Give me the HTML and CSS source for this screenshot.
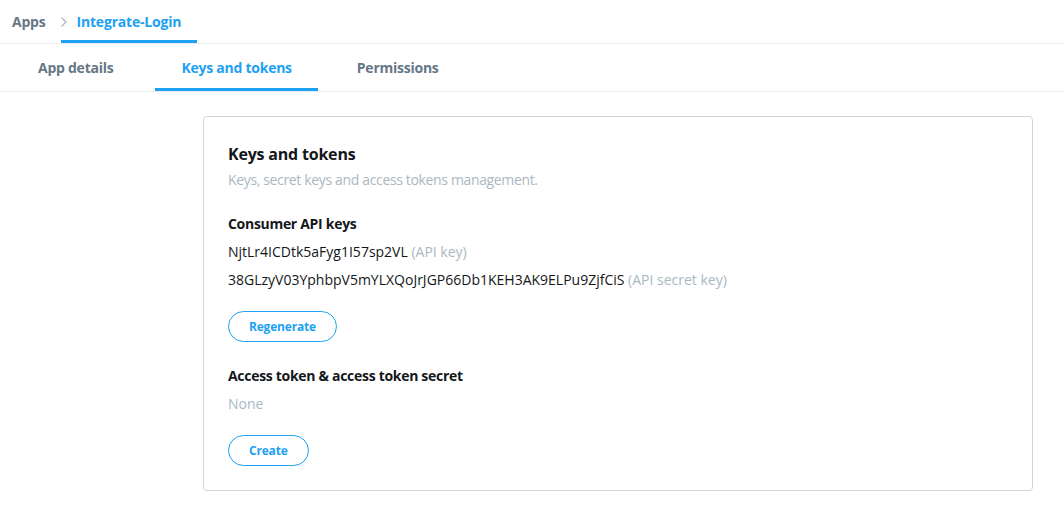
FILE: index.html
```html
<!DOCTYPE html>
<html>
<head>
<meta charset="utf-8">
<link rel="stylesheet" href="styles.css">
</head>
<body>
<header class="crumbs">
  <a class="crumb">Apps</a>
  <svg class="chev" width="8" height="12" viewBox="0 0 8 12"><path d="M1.5 1.5 L6 6 L1.5 10.5" fill="none" stroke="#aab8c2" stroke-width="1.3"/></svg>
  <a class="crumb crumb-active">Integrate-Login</a>
</header>
<nav class="tabs">
  <a class="tab">App details</a>
  <a class="tab tab-active">Keys and tokens</a>
  <a class="tab">Permissions</a>
</nav>
<main class="content">
  <section class="card">
    <h1 class="card-title">Keys and tokens</h1>
    <p class="card-sub">Keys, secret keys and access tokens management.</p>
    <h2 class="sect">Consumer API keys</h2>
    <p class="key">NjtLr4ICDtk5aFyg1I57sp2VL <span class="muted">(API key)</span></p>
    <p class="key">38GLzyV03YphbpV5mYLXQoJrJGP66Db1KEH3AK9ELPu9ZjfCiS <span class="muted">(API secret key)</span></p>
    <button class="btn btn-regen">Regenerate</button>
    <h2 class="sect sect-2">Access token &amp; access token secret</h2>
    <p class="key muted">None</p>
    <button class="btn btn-create">Create</button>
  </section>
</main>
</body>
</html>
```
FILE: styles.css
```css
* { box-sizing: border-box; }
body {
  margin: 0;
  font-family: "Open Sans", "Noto Sans", sans-serif;
  color: #14171a;
  background: #fff;
}
.crumbs {
  height: 44px;
  display: flex;
  align-items: stretch;
  padding-left: 12px;
  border-bottom: 1px solid #e6ecf0;
}
.crumb {
  font-size: 14px;
  font-weight: 700;
  color: #657786;
  display: flex;
  align-items: center;
  padding-bottom: 1px;
  letter-spacing: -0.2px;
}
.chev { align-self: center; margin: 0 9px 0 14px; }
.crumb-active {
  color: #1da1f2;
  margin-left: -16px;
  padding: 0 16px 0 16px;
  border-bottom: 3px solid #1da1f2;
  padding-top: 3px;
}
.tabs {
  height: 48px;
  display: flex;
  padding-left: 12px;
  border-bottom: 1px solid #e6ecf0;
}
.tab {
  font-size: 14px;
  font-weight: 700;
  color: #657786;
  padding: 0 26px;
  display: flex;
  align-items: center;
  margin-right: 16px;
  border-bottom: 3px solid transparent;
  padding-top: 2px;
  letter-spacing: -0.25px;
}
.tab-active { color: #1da1f2; border-bottom-color: #1da1f2; margin-right: 13px; }
.content { padding: 24px 31px 0 203px; }
.card {
  border: 1px solid #ccd6dd;
  border-radius: 4px;
  padding: 26px 24px 25px 24px;
  height: 375px;
}
.card-title { margin: 0; font-size: 16px; font-weight: 700; line-height: 22px; letter-spacing: -0.2px; }
.card-sub { margin: 5px 0 0; font-size: 14px; color: #aab8c2; line-height: 20px; letter-spacing: -0.35px; }
.sect { margin: 24px 0 0; font-size: 14px; font-weight: 700; line-height: 20px; letter-spacing: -0.3px; }
.sect-2 { margin-top: 24px; }
.key { margin: 8px 0 0; font-size: 14px; line-height: 20px; }
.muted { color: #aab8c2; }
.btn {
  display: block;
  margin-top: 21px;
  height: 31px;
  border: 1px solid #1da1f2;
  border-radius: 16px;
  background: #fff;
  color: #1da1f2;
  font-family: inherit;
  font-size: 12px;
  font-weight: 700;
  padding: 0 20px;
  letter-spacing: -0.2px;
}
.btn-create { padding: 0 20px; }
```
